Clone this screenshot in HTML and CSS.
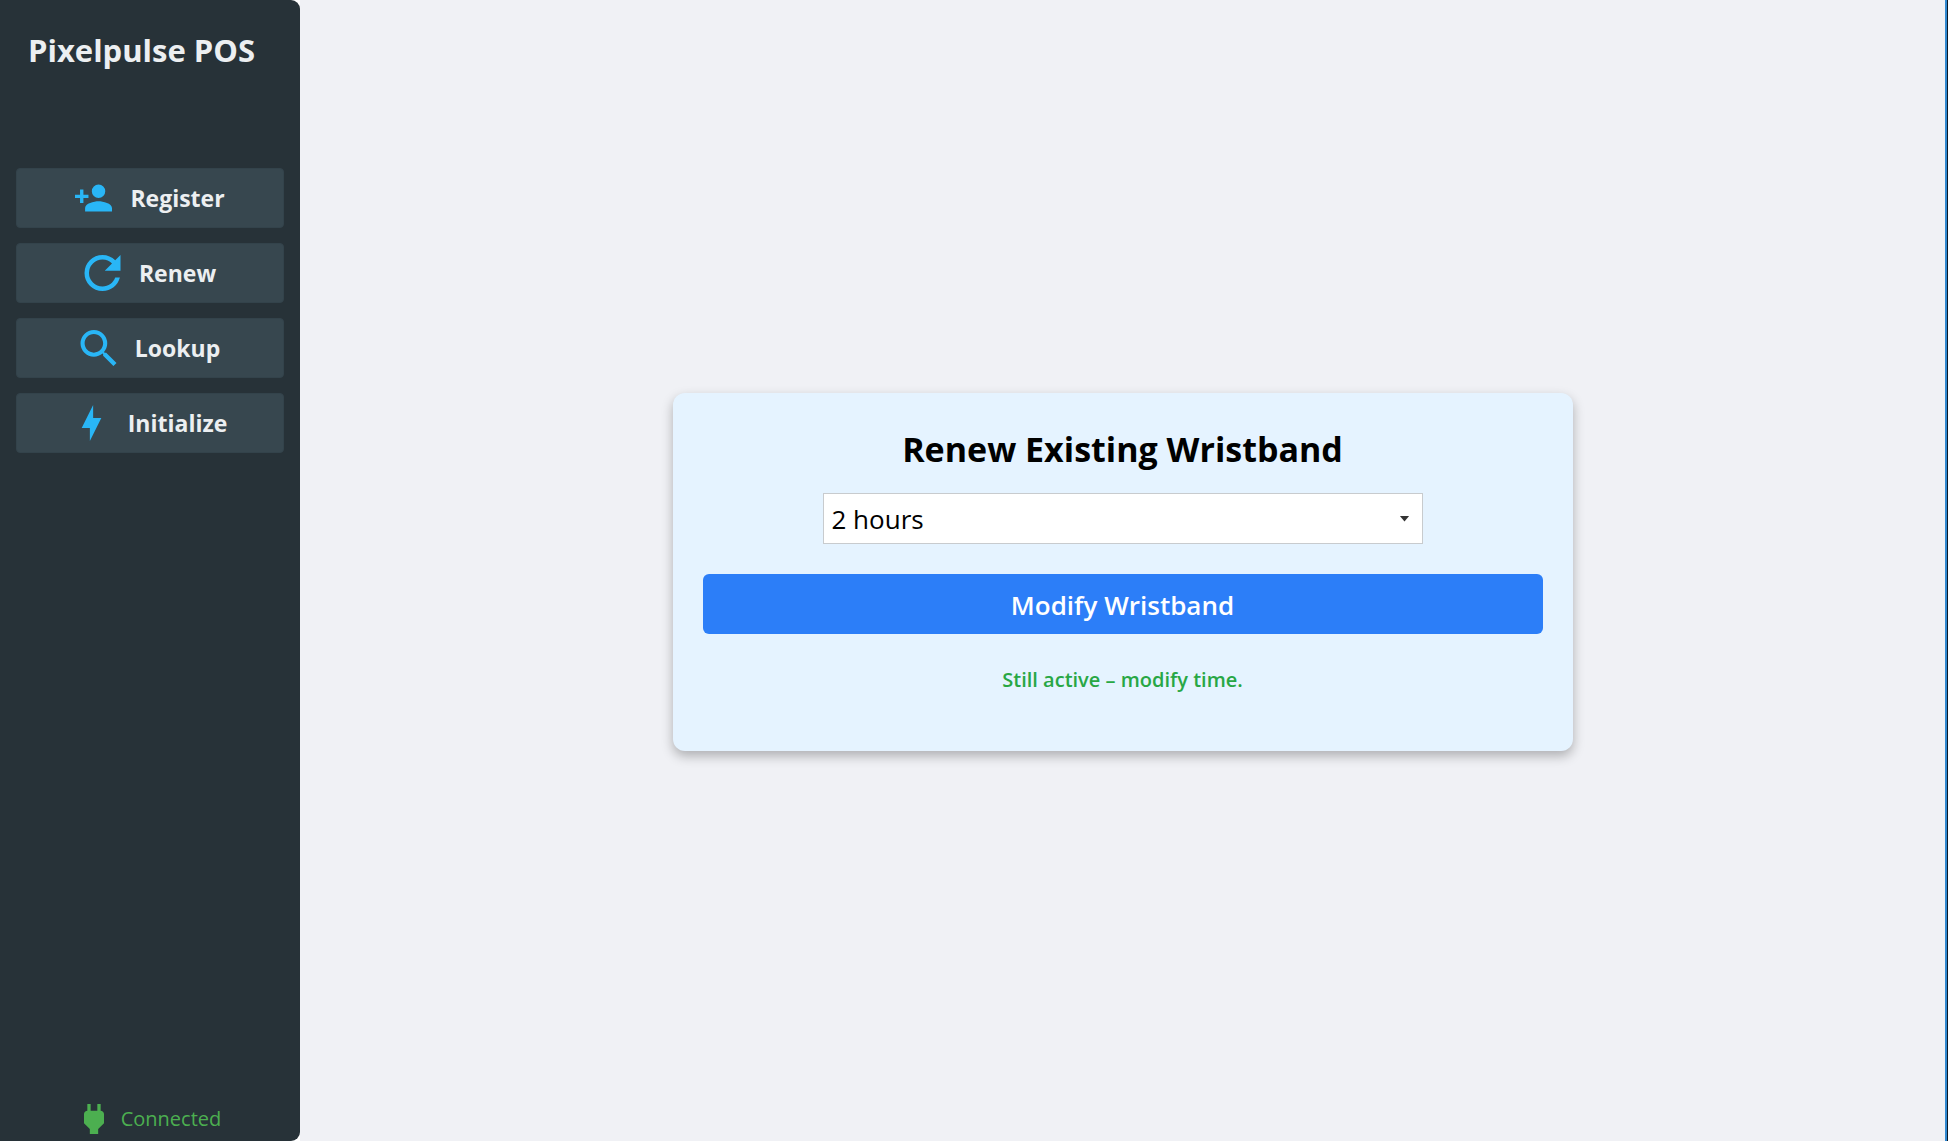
FILE: index.html
```html
<!DOCTYPE html>
<html lang="en">
<head>
<meta charset="utf-8">
<meta name="viewport" content="width=device-width, initial-scale=1">
<title>Pixelpulse POS</title>
<link rel="stylesheet" href="styles.css">
</head>
<body>
<div class="app">
  <aside class="sidebar">
    <h1 class="brand">Pixelpulse POS</h1>
    <nav class="menu">
      <button type="button" class="menu-item">
        <svg class="icon" viewBox="1 4 22 16" aria-hidden="true"><path d="M15,14C12.33,14 7,15.33 7,18V20H23V18C23,15.33 17.67,14 15,14M6,10V7H4V10H1V12H4V15H6V12H9V10M15,12A4,4 0 0,0 19,8A4,4 0 0,0 15,4A4,4 0 0,0 11,8A4,4 0 0,0 15,12Z"/></svg>
        <span>Register</span>
      </button>
      <button type="button" class="menu-item">
        <svg class="icon" viewBox="4 4 16 16" aria-hidden="true"><path d="M17.65,6.35C16.2,4.9 14.21,4 12,4A8,8 0 0,0 4,12A8,8 0 0,0 12,20C15.73,20 18.84,17.45 19.73,14H17.65C16.83,16.33 14.61,18 12,18A6,6 0 0,1 6,12A6,6 0 0,1 12,6C13.66,6 15.14,6.69 16.22,7.78L13,11H20V4L17.65,6.35Z"/></svg>
        <span>Renew</span>
      </button>
      <button type="button" class="menu-item">
        <svg class="icon" viewBox="3 3 17.5 17.5" aria-hidden="true"><path d="M9.5,3A6.5,6.5 0 0,1 16,9.5C16,11.11 15.41,12.59 14.44,13.73L14.71,14H15.5L20.5,19L19,20.5L14,15.5V14.71L13.73,14.44C12.59,15.41 11.11,16 9.5,16A6.5,6.5 0 0,1 3,9.5A6.5,6.5 0 0,1 9.5,3M9.5,5C7,5 5,7 5,9.5C5,12 7,14 9.5,14C12,14 14,12 14,9.5C14,7 12,5 9.5,5Z"/></svg>
        <span>Lookup</span>
      </button>
      <button type="button" class="menu-item">
        <svg class="icon" viewBox="6 1 12 22" aria-hidden="true"><path d="M11 15H6L13 1V9H18L11 23V15Z"/></svg>
        <span>Initialize</span>
      </button>
    </nav>
    <p class="connection">
      <svg class="icon icon-small" viewBox="6 3 12 18" aria-hidden="true"><path d="M16,7V3H14V7H10V3H8V7H8C7,7 6,8 6,9V14.5L9.5,18V21H14.5V18L18,14.5V9C18,8 17,7 16,7Z"/></svg>
      <span>Connected</span>
    </p>
  </aside>
  <main class="content">
    <section class="card">
      <h2 class="card-title">Renew Existing Wristband</h2>
      <div class="duration">
        <select class="duration-select" aria-label="Duration">
          <option>1 hour</option>
          <option selected>2 hours</option>
          <option>3 hours</option>
        </select>
      </div>
      <button type="button" class="submit">Modify Wristband</button>
      <p class="status">Still active – modify time.</p>
    </section>
  </main>
  <div class="window-edge"></div>
</div>
</body>
</html>
```

FILE: styles.css
```css
* {
  box-sizing: border-box;
}

body {
  margin: 0;
  background: #fff;
  font-family: "Open Sans", "Noto Sans", sans-serif;
}

h1, h2, p {
  margin: 0;
}

button, select {
  font-family: inherit;
}

.app {
  display: flex;
  min-height: 100vh;
  background: linear-gradient(to right, #fff 300px, #f0f1f5 300px);
}

.sidebar {
  display: flex;
  flex-direction: column;
  flex: 0 0 300px;
  padding: 24px 16px 2px;
  border-radius: 0 9px 9px 0;
  background: #273238;
}

.brand {
  padding-left: 12px;
  color: #eceff1;
  font-size: 31px;
  font-weight: 700;
  line-height: 52px;
  white-space: nowrap;
}

.menu {
  display: flex;
  flex-direction: column;
  gap: 15px;
  margin-top: 92px;
}

.menu-item {
  display: flex;
  align-items: center;
  justify-content: center;
  gap: 18px;
  height: 60px;
  padding: 0;
  border: 1px solid #33434b;
  border-radius: 4px;
  background: #37474f;
  color: #eceff1;
  font-size: 23px;
  font-weight: 700;
}

.icon {
  flex: none;
  width: 37px;
  height: 36px;
  fill: #29b6f6;
}

.icon-small {
  width: 30px;
  height: 30px;
  fill: #4caf50;
}

.connection {
  display: flex;
  align-items: center;
  justify-content: center;
  gap: 12px;
  margin-top: auto;
  color: #4caf50;
  font-size: 20px;
  line-height: 40px;
}

.content {
  display: flex;
  flex: 1;
  align-items: center;
  justify-content: center;
  padding: 26px 24px 24px;
}

.card {
  display: flex;
  flex-direction: column;
  align-items: center;
  width: 100%;
  max-width: 900px;
  padding: 30px 30px 54px;
  border-radius: 12px;
  background: #e5f3ff;
  box-shadow: 0 5px 12px rgba(0, 0, 0, 0.28);
}

.card-title {
  color: #000;
  font-size: 34px;
  font-weight: 700;
  line-height: 52px;
}

.duration {
  position: relative;
  width: 600px;
  max-width: 100%;
  margin-top: 18px;
}

.duration::after {
  position: absolute;
  top: 23px;
  right: 13px;
  width: 10px;
  height: 6px;
  background: #333;
  clip-path: polygon(0 0, 100% 0, 50% 100%);
  content: "";
  pointer-events: none;
}

.duration-select {
  display: block;
  width: 100%;
  height: 51px;
  padding: 2px 8px 0;
  border: 1px solid #c8cbce;
  border-radius: 0;
  background: #fff;
  color: #000;
  font-size: 26px;
  appearance: none;
}

.submit {
  width: 100%;
  height: 60px;
  margin-top: 30px;
  padding: 2px 0 0;
  border: 0;
  border-radius: 6px;
  background: #2c7ef8;
  color: #fff;
  font-size: 26px;
  font-weight: 600;
}

.status {
  margin-top: 29px;
  color: #28a745;
  font-size: 20px;
  font-weight: 600;
  line-height: 34px;
}

.window-edge {
  display: flex;
  flex: 0 0 3px;
  flex-direction: column;
  align-items: flex-end;
  border-right: 1px solid #0d1a26;
  background: #3088d0;
}
```
